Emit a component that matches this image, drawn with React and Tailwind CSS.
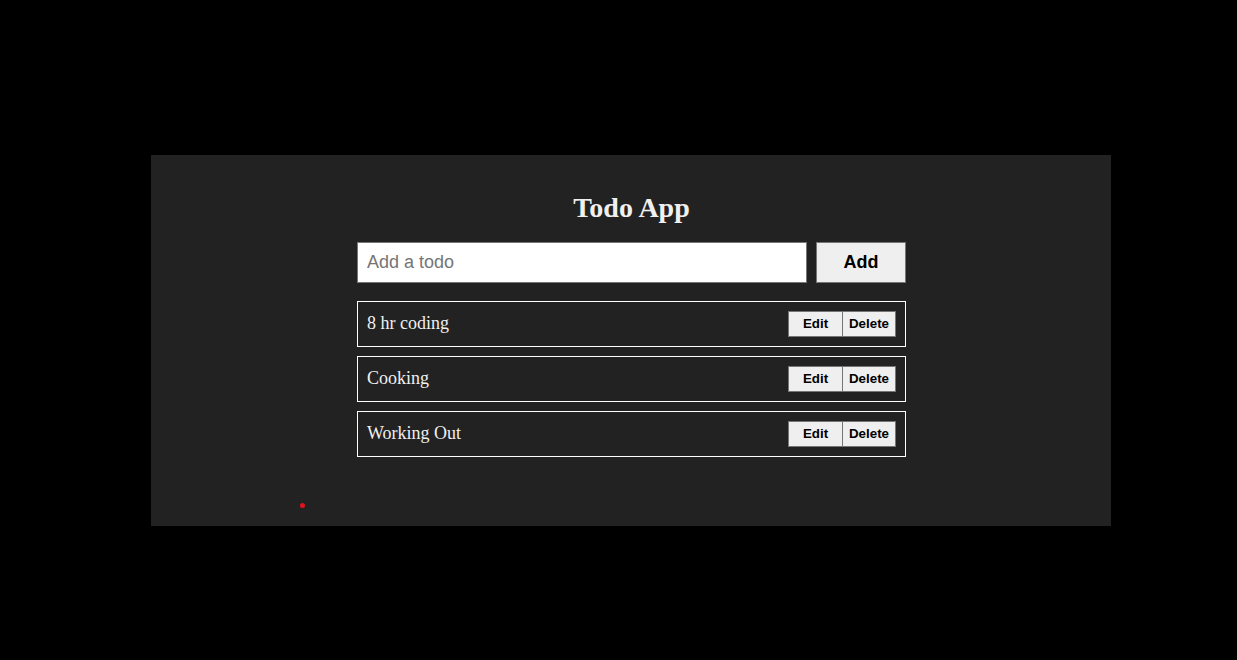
export default function App() {
  const todos = ["8 hr coding", "Cooking", "Working Out"];
  return (
    <div className="min-h-[660px] bg-black pt-[155px]">
      <div className="relative ml-[151px] h-[371px] w-[960px] bg-[#222222]">
        <div className="ml-[206px] w-[549px] pt-[37px]">
          <h1 className="text-center font-['Liberation_Serif',serif] text-[28px] font-bold leading-[32px] text-[#f0f0f0]">
            Todo App
          </h1>
          <div className="mt-[18px] flex gap-[9px]">
            <input
              className="h-[41px] w-[450px] border border-[#767676] bg-white px-[9px] font-['Liberation_Sans',sans-serif] text-[18px] text-black outline-none placeholder:text-[#757575]"
              placeholder="Add a todo"
            />
            <button className="h-[41px] w-[90px] border border-[#767676] bg-[#efefef] font-['Liberation_Sans',sans-serif] text-[18px] font-bold text-black">
              Add
            </button>
          </div>
          <div className="mt-[18px] flex flex-col gap-[9px]">
            {todos.map((t) => (
              <div
                key={t}
                className="flex h-[46px] items-center justify-between border border-white pl-[9px] pr-[9px]"
              >
                <span className="-mt-px font-['Liberation_Serif',serif] text-[18px] text-[#f0f0f0]">{t}</span>
                <div className="flex">
                  <button className="h-[26px] w-[55px] border border-[#767676] bg-[#efefef] font-['Liberation_Sans',sans-serif] text-[13.33px] font-bold text-black">
                    Edit
                  </button>
                  <button className="-ml-px h-[26px] w-[54px] border border-[#767676] bg-[#efefef] font-['Liberation_Sans',sans-serif] text-[13.33px] font-bold text-black">
                    Delete
                  </button>
                </div>
              </div>
            ))}
          </div>
        </div>
        <div className="absolute left-[149px] top-[348px] h-[5px] w-[5px] rounded-full bg-[#e0141e]" />
      </div>
    </div>
  );
}
